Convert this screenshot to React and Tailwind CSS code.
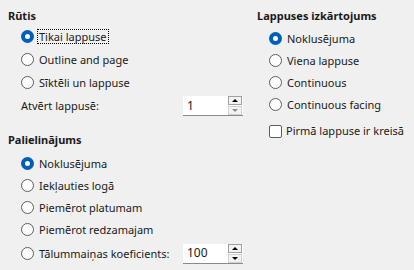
import { useState } from 'react'

const FONT = { fontFamily: '"Noto Sans", "Liberation Sans", sans-serif' }

function Radio({ checked, label, focused, onClick }) {
  return (
    <div className="flex items-center cursor-default whitespace-nowrap" onClick={onClick}>
      {checked ? (
        <span className="w-[13px] h-[13px] rounded-full bg-[#005fb8] flex items-center justify-center shrink-0">
          <span className="w-[5px] h-[5px] rounded-full bg-white" />
        </span>
      ) : (
        <span className="w-[13px] h-[13px] rounded-full border border-[#5c5c5c] bg-white shrink-0" />
      )}
      <span
        className={
          'ml-[3px] px-[1px] leading-[13px] ' +
          (focused ? 'border border-dotted border-black' : 'border border-transparent')
        }
      >
        {label}
      </span>
    </div>
  )
}

function Spin({ value, downDisabled }) {
  return (
    <div className="w-[60px] h-[20px] bg-white border-b border-[#8a8a8a] flex items-center">
      <span className="flex-1 pl-[4px] leading-[18px] text-[12px]">{value}</span>
      <div className="flex flex-col mr-[1px] gap-[1px]">
        <div className="w-[14px] h-[9px] bg-[#f3f3f3] border border-[#a0a0a0] flex items-center justify-center">
          <span className="w-0 h-0 border-l-[3px] border-r-[3px] border-b-[3px] border-l-transparent border-r-transparent border-b-black" />
        </div>
        <div className="w-[14px] h-[9px] bg-[#f3f3f3] border border-[#d0d0d0] flex items-center justify-center">
          <span
            className={
              'w-0 h-0 border-l-[3px] border-r-[3px] border-t-[3px] border-l-transparent border-r-transparent ' +
              (downDisabled ? 'border-t-[#8a8a8a]' : 'border-t-black')
            }
          />
        </div>
      </div>
    </div>
  )
}

export default function App() {
  const [pane, setPane] = useState(0)
  const [zoom, setZoom] = useState(0)
  const [layout, setLayout] = useState(0)
  const [leftFirst, setLeftFirst] = useState(false)

  const panes = ['Tikai lappuse', 'Outline and page', 'Sīktēli un lappuse']
  const zooms = ['Noklusējuma', 'Iekļauties logā', 'Piemērot platumam', 'Piemērot redzamajam']
  const layouts = ['Noklusējuma', 'Viena lappuse', 'Continuous', 'Continuous facing']

  return (
    <div className="w-[414px] h-[270px] bg-[#f0f0f0] text-[11px] text-[#1a1a1a] flex overflow-hidden" style={FONT}>
      {/* Left column */}
      <div className="w-[249px] pl-[8px] pt-[8px] flex flex-col">
        <div className="h-[16px] leading-[16px] font-bold">Rūtis</div>
        <div className="ml-[13px] mt-[1px] flex flex-col">
          {panes.map((p, i) => (
            <div key={p} className="h-[23px] flex items-center">
              <Radio checked={pane === i} focused={i === 0} label={p} onClick={() => setPane(i)} />
            </div>
          ))}
          <div className="h-[22px] mt-[1px] flex items-center">
            <span className="w-[162px]">Atvērt lappusē:</span>
            <Spin value="1" downDisabled />
          </div>
        </div>

        <div className="h-[16px] leading-[16px] font-bold mt-[15px]">Palielinājums</div>
        <div className="ml-[13px] mt-[4px] flex flex-col">
          {zooms.map((z, i) => (
            <div key={z} className="h-[22px] flex items-center">
              <Radio checked={zoom === i} label={z} onClick={() => setZoom(i)} />
            </div>
          ))}
          <div className="h-[21px] mt-[3px] flex items-center">
            <div className="w-[162px]">
              <Radio checked={zoom === 4} label="Tālummaiņas koeficients:" onClick={() => setZoom(4)} />
            </div>
            <Spin value="100" />
          </div>
        </div>
      </div>

      {/* Right column */}
      <div className="flex-1 pl-[8px] pt-[8px] flex flex-col">
        <div className="h-[16px] leading-[16px] font-bold whitespace-nowrap">Lappuses izkārtojums</div>
        <div className="ml-[12px] mt-[3px] flex flex-col">
          {layouts.map((l, i) => (
            <div key={l} className="h-[22px] flex items-center">
              <Radio checked={layout === i} label={l} onClick={() => setLayout(i)} />
            </div>
          ))}
          <div className="h-[22px] mt-[5px] flex items-center whitespace-nowrap" onClick={() => setLeftFirst(v => !v)}>
            <span className="w-[13px] h-[13px] rounded-[2px] border border-[#5c5c5c] bg-white shrink-0 flex items-center justify-center text-[10px] leading-none">
              {leftFirst ? '✓' : ''}
            </span>
            <span className="ml-[4px]">Pirmā lappuse ir kreisā</span>
          </div>
        </div>
      </div>
    </div>
  )
}
